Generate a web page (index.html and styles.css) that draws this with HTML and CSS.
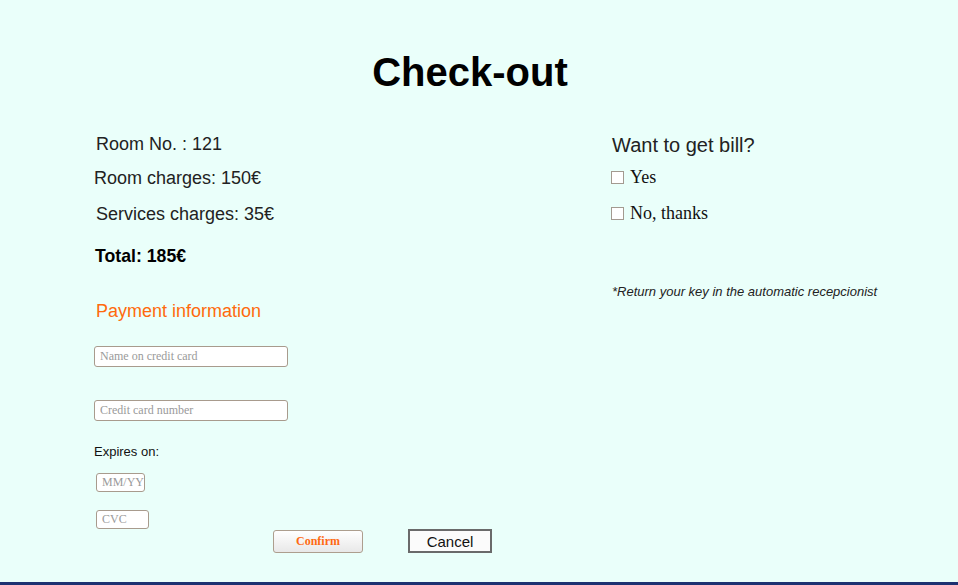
FILE: index.html
```html
<!DOCTYPE html>
<html lang="en">
<head>
<meta charset="utf-8">
<title>Check-out</title>
<link rel="stylesheet" href="styles.css">
</head>
<body>
<div class="page">
  <h1 class="title">Check-out</h1>
  <div class="columns">
    <div class="left">
      <p class="line room">Room No. : 121</p>
      <p class="line charges">Room charges: 150€</p>
      <p class="line services">Services charges: 35€</p>
      <p class="total">Total: 185€</p>
      <h2 class="pay-title">Payment information</h2>
      <input class="field name" type="text" placeholder="Name on credit card">
      <input class="field number" type="text" placeholder="Credit card number">
      <p class="expires">Expires on:</p>
      <input class="field small mmyy" type="text" placeholder="MM/YY">
      <div class="bottom-row">
        <input class="field small cvc" type="text" placeholder="CVC">
        <button class="btn confirm" type="button">Confirm</button>
        <button class="btn cancel" type="button">Cancel</button>
      </div>
    </div>
    <div class="right">
      <h2 class="bill-title">Want to get bill?</h2>
      <label class="check yes"><input type="checkbox" class="box"><span>Yes</span></label>
      <label class="check no"><input type="checkbox" class="box"><span>No, thanks</span></label>
      <p class="note">*Return your key in the automatic recepcionist</p>
    </div>
  </div>
</div>
</body>
</html>
```

FILE: styles.css
```css
html, body {
  margin: 0;
  padding: 0;
}
body {
  background: #eafffa;
  font-family: "Liberation Sans", Arial, sans-serif;
  color: #222;
}
.page {
  height: 585px;
  box-sizing: border-box;
  border-bottom: 3px solid #1c3171;
  overflow: hidden;
}
.title {
  margin: 49px 18px 0 0;
  font-size: 40px;
  line-height: 46px;
  font-weight: bold;
  text-align: center;
  color: #000;
}
.columns {
  display: grid;
  grid-template-columns: 517px 1fr;
  padding-left: 94px;
}
.left, .right {
  display: flex;
  flex-direction: column;
  align-items: flex-start;
}
p, h2 {
  margin: 0;
}
.line {
  font-size: 18px;
  line-height: 20px;
}
.room {
  margin-top: 39px;
  margin-left: 2px;
}
.charges {
  margin-top: 14px;
}
.services {
  margin-top: 16px;
  margin-left: 2px;
}
.total {
  margin-top: 22px;
  margin-left: 1px;
  font-size: 17.7px;
  line-height: 20px;
  font-weight: bold;
  color: #000;
}
.pay-title {
  margin-top: 35px;
  margin-left: 2px;
  font-size: 18px;
  line-height: 20px;
  font-weight: normal;
  color: #ff6a0d;
}
.field {
  box-sizing: border-box;
  width: 194px;
  height: 21px;
  padding: 0 5px;
  border: 1px solid #a89b8d;
  border-radius: 3px;
  background: #fff;
  font-family: "Liberation Serif", "Times New Roman", serif;
  font-size: 12px;
  color: #333;
  outline: none;
}
.field::placeholder {
  color: #9a9a9a;
}
.name {
  margin-top: 25px;
}
.number {
  margin-top: 33px;
}
.expires {
  margin-top: 23px;
  font-size: 13px;
  line-height: 15px;
  color: #111;
}
.small {
  height: 19px;
  padding: 0 0 0 5px;
  margin-left: 2px;
  font-size: 12px;
}
.mmyy {
  width: 49px;
  margin-top: 14px;
}
.bottom-row {
  display: flex;
  align-items: flex-start;
  margin-top: 18px;
}
.cvc {
  width: 53px;
}
.btn {
  box-sizing: border-box;
  padding: 0;
  cursor: pointer;
}
.confirm {
  width: 90px;
  height: 23px;
  margin-top: 20px;
  margin-left: 124px;
  border: 1px solid #ad9e8e;
  border-radius: 3px;
  background: linear-gradient(#ffffff, #e8e8e8);
  font-family: "Liberation Serif", "Times New Roman", serif;
  font-size: 12px;
  font-weight: bold;
  color: #ff6a13;
}
.cancel {
  width: 84px;
  height: 24px;
  margin-top: 19px;
  margin-left: 45px;
  border: 2px solid #6a6a6a;
  border-radius: 0;
  background: #fbfbfb;
  font-family: "Liberation Sans", Arial, sans-serif;
  font-size: 15px;
  color: #111;
}
.bill-title {
  margin-top: 39px;
  margin-left: 1px;
  font-size: 20px;
  line-height: 23px;
  font-weight: normal;
  color: #222;
}
.check {
  display: flex;
  align-items: flex-start;
  font-family: "Liberation Serif", "Times New Roman", serif;
  font-size: 18px;
  line-height: 20px;
  color: #111;
}
.yes {
  margin-top: 10px;
}
.no {
  margin-top: 16px;
}
.box {
  appearance: none;
  -webkit-appearance: none;
  box-sizing: border-box;
  width: 13px;
  height: 13px;
  margin: 4px 6px 0 0;
  border: 1px solid #a39a90;
  background: #fff;
}
.note {
  margin-top: 61px;
  margin-left: 1px;
  font-size: 13px;
  line-height: 15px;
  font-style: italic;
  color: #222;
}
```
